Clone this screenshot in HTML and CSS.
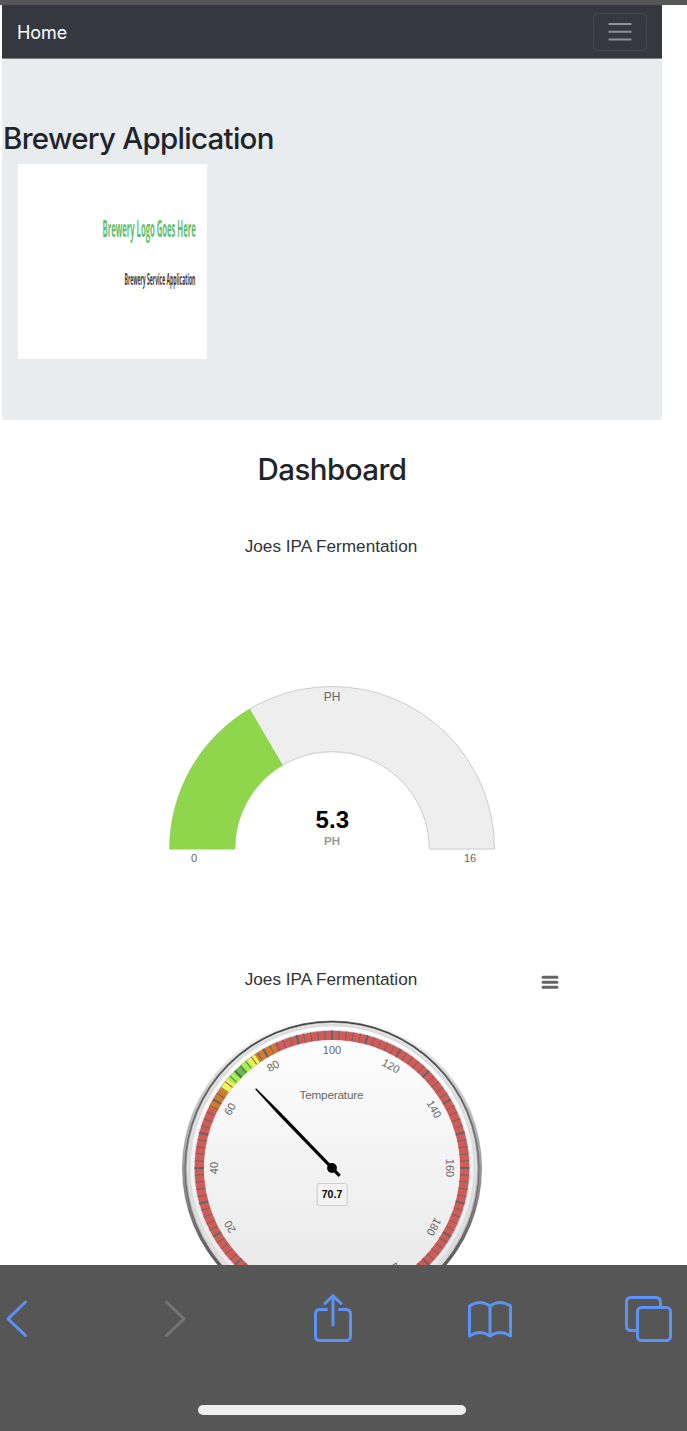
FILE: index.html
```html
<!DOCTYPE html>
<html lang="en">
<head>
<meta charset="utf-8">
<title>Brewery Application</title>
<link rel="stylesheet" href="styles.css">
</head>
<body>
<div class="statusbar"></div>
<main class="page">
  <nav class="navbar">
    <a class="nav-home">Home</a>
    <button class="nav-toggle" aria-label="Menu"><svg width="24" height="20" viewBox="0 0 24 20"><path d="M.5 2H23.5M.5 9.8H23.5M.5 17.4H23.5" stroke="#919496" stroke-width="2"/></svg></button>
  </nav>
  <header class="hero">
    <h1 class="hero-title">Brewery Application</h1>
    <svg class="logo" width="189" height="195" viewBox="0 0 189 195">
      <text class="logo-name" transform="translate(84.500 73) scale(.36 1)" textLength="259" lengthAdjust="spacingAndGlyphs">Brewery Logo Goes Here</text>
      <text class="logo-sub" transform="translate(106.500 120.500) scale(.36 1)" textLength="197" lengthAdjust="spacingAndGlyphs">Brewery Service Application</text>
    </svg>
  </header>
  <h2 class="dash-title">Dashboard</h2>
  <section class="chart chart-ph">
    <h3 class="chart-title">Joes IPA Fermentation</h3>
    <svg class="ph-gauge" width="340" height="190" viewBox="162 680 340 190">
      <path d="M169.5 849A162.5 162.5 0 0 1 494.5 849H429.3A97.3 97.3 0 0 0 234.7 849Z" fill="#eee" stroke="#ccc"/>
      <path d="M169.5 849.3A162.5 162.5 0 0 1 249.8 708.8L282.8 765.1A97.3 97.3 0 0 0 235.1 849.3Z" fill="#8fd64d"/>
      <g class="gauge-text">
        <text x="332" y="701" class="t12">PH</text>
        <text x="194" y="862.3" class="t11">0</text>
        <text x="470" y="862.3" class="t11">16</text>
        <text x="332.3" y="828" class="ph-value">5.3</text>
        <text x="332" y="845" class="ph-unit">PH</text>
      </g>
    </svg>
  </section>
  <section class="chart chart-temp">
    <div class="temp-head">
      <h3 class="chart-title">Joes IPA Fermentation</h3>
      <svg class="chart-menu" width="18" height="16" viewBox="0 0 18 16"><path d="M2 3.2H16M2 8.2H16M2 13.2H16" stroke="#666" stroke-width="3" stroke-linecap="round"/></svg>
    </div>
    <svg class="temp-gauge" width="304" height="304" viewBox="-152 -152 304 304">
      <defs>
        <linearGradient id="rim" x2="0" y2="1"><stop stop-color="#fff"/><stop offset="1" stop-color="#333"/></linearGradient>
        <linearGradient id="bezel" x2="0" y2="1"><stop stop-color="#333"/><stop offset="1" stop-color="#fff"/></linearGradient>
        <linearGradient id="face" x2="0" y2="1"><stop stop-color="#fff"/><stop offset="1" stop-color="#e6e6e6"/></linearGradient>
      </defs>
      <circle r="150" fill="url(#rim)"/>
      <circle r="147" fill="url(#bezel)" stroke="#555" stroke-width=".7"/>
      <circle r="145.2" fill="url(#face)" stroke="#ccc" stroke-width=".7"/>
      <circle r="143" fill="none" stroke="#ddd" stroke-width="3"/>
      <circle r="137.6" fill="none" stroke="#ccd6eb"/>
      <g class="bands" transform="rotate(120)">
        <circle r="132.7" pathLength="360" stroke="#d35b57" stroke-dasharray="300 60"/>
        <circle r="132.7" pathLength="360" stroke="#d27a2d" stroke-dasharray="0 86.3 38.7 360"/>
        <circle r="132.7" pathLength="360" stroke="#f5f552" stroke-dasharray="0 95.7 20 360"/>
        <circle r="132.7" pathLength="360" stroke="#a2f24a" stroke-dasharray="0 100.5 11.5 360"/>
        <circle r="132.7" pathLength="360" stroke="#69bb4a" stroke-dasharray="0 104.5 4.2 360"/>
        <circle class="tick" r="132.7" pathLength="360" stroke-dasharray=".42 2.58" stroke-dashoffset=".21"/>
        <circle class="tick" r="132.7" pathLength="360" stroke-dasharray=".9 14.1" stroke-dashoffset=".45"/>
      </g>
      <g class="gauge-text t11">
        <text y="-114">100</text>
        <text transform="rotate(30)" y="-114">120</text>
        <text transform="rotate(60)" y="-114">140</text>
        <text transform="rotate(90)" y="-114">160</text>
        <text transform="rotate(120)" y="-114">180</text>
        <text transform="rotate(150)" y="-114">200</text>
        <text transform="rotate(-30)" y="-114">80</text>
        <text transform="rotate(-60)" y="-114">60</text>
        <text transform="rotate(-90)" y="-114">40</text>
        <text transform="rotate(-120)" y="-114">20</text>
        <text class="gauge-label" x="-.5" y="-69" textLength="64">Temperature</text>
      </g>
      <rect x="-14.8" y="15.5" width="30" height="22" rx="2" fill="#f3f3f3" stroke="#ccc"/>
      <text class="temp-value" y="30">70.7</text>
      <path d="M-.7-110H.7L1.6-76V11H-1.6V-76Z" transform="rotate(-43.95)"/>
      <circle r="4.9"/>
    </svg>
  </section>
</main>
<footer class="toolbar">
  <div class="toolbar-icons">
    <svg width="48" height="40" viewBox="0 0 24 40"><path d="M20.5 3L3 19.8L20.5 36.5" stroke="#5b93f5"/></svg>
    <svg width="48" height="40" viewBox="0 0 24 40"><path d="M3.5 3L21 19.8L3.5 36.5" stroke="#737373"/></svg>
    <svg class="share" width="48" height="50" viewBox="0 0 40 50"><path d="M13.5 15.5H7Q2.5 15.5 2.5 20V42Q2.5 46.5 7 46.5H33Q37.5 46.5 37.5 42V20Q37.5 15.5 33 15.5H26.5M20 31V2M12 9.5L20 1.7L28 9.5" stroke="#5b93f5"/></svg>
    <svg class="book" width="48" height="40" viewBox="0 0 46 40"><path d="M23 6V36M23 6Q13-1 2.5 6V36Q13 29 23 36Q33 29 43.5 36V6Q33-1 23 6" stroke="#5b93f5"/></svg>
    <svg width="48" height="48" viewBox="0 0 48 48"><path d="M12 35.5H7Q2.500 35.500 2.500 31V7Q2.500 2.500 7 2.500H32Q36.500 2.500 36.500 7V12" stroke="#5b93f5"/><rect x="13.500" y="12.500" width="33" height="33" rx="4" stroke="#5b93f5"/></svg>
  </div>
  <div class="home-indicator"></div>
</footer>
</body>
</html>
```
FILE: styles.css
```css
* { box-sizing: border-box; }
body {
  margin: 0;
  width: 687px;
  height: 1431px;
  overflow: hidden;
  display: flex;
  flex-direction: column;
  background: #fff;
  color: #212529;
  font-family: Inter, "Liberation Sans", sans-serif;
}
h1, h2, h3 { margin: 0; }
svg { display: block; flex: none; }
.statusbar { height: 5px; flex: none; background: #565656; }
.page { width: 660px; height: 1260px; margin-left: 2px; overflow: hidden; flex: none; }
.navbar {
  height: 54px;
  padding: 0 15px;
  display: flex;
  align-items: center;
  justify-content: space-between;
  background: #35383f;
  border-bottom: 1px solid #7c8085;
}
.nav-home { color: #fff; font-size: 18px; letter-spacing: -.1px; line-height: 24px; padding-top: 2px; }
.nav-toggle {
  width: 54px;
  height: 38px;
  padding: 0;
  display: flex;
  align-items: center;
  justify-content: center;
  background: none;
  border: 1px solid #45484d;
  border-radius: 4px;
}
.hero { height: 361px; padding-top: 60px; background: #e8ecef; border-radius: 4px; }
.hero-title { padding-left: 1px; font-size: 29.500px; line-height: 38px; font-weight: 500; white-space: nowrap; letter-spacing: -.72px; }
.logo { margin: 7px 0 0 16px; background: #fff; }
.logo-name, .logo-sub { font-family: "Open Sans", "Noto Sans", sans-serif; font-weight: 700; }
.logo-name { font-size: 23px; fill: #62bd70; }
.logo-sub { font-size: 16px; fill: #3b3b40; }
.dash-title { margin-top: 29px; height: 40px; font-size: 29.500px; line-height: 40px; font-weight: 500; text-align: center; letter-spacing: -.55px; }
.chart { color: #333; font-family: "Liberation Sans", Arial, sans-serif; }
.chart-ph { height: 431px; padding-top: 46px; }
.chart-title { padding-right: 2px; font-size: 17.200px; line-height: 22px; font-weight: 400; text-align: center; }
.ph-gauge { margin: 123px 0 0 160px; }
.gauge-text { text-anchor: middle; fill: #666; }
.gauge-text, .temp-value { font-family: "Liberation Sans", Arial, sans-serif; }
.t12 { font-size: 12px; }
.t11 { font-size: 11px; }
.gauge-label { font-size: 11.700px; }
.ph-value { font-size: 24px; font-weight: 700; fill: #000; }
.ph-unit { font-size: 11.500px; font-weight: 700; fill: #999; }
.chart-temp { padding-top: 48px; }
.temp-head { display: grid; grid-template-columns: 1fr auto 1fr; }
.temp-head .chart-title { grid-column: 2; }
.chart-menu { margin: 6px 0 0 122px; }
.temp-gauge { margin: 26px auto 0; }
.bands circle { fill: none; stroke-width: 9.200px; }
.bands .tick { stroke: #666; }
.temp-value { font-size: 10.500px; font-weight: 700; text-anchor: middle; fill: #000; }
.toolbar { height: 166px; flex: none; padding: 27px 0 16px; background: #565656; display: flex; flex-direction: column; align-items: flex-start; justify-content: space-between; }
.toolbar-icons { width: 679px; height: 54px; margin-left: -7px; display: flex; align-items: center; justify-content: space-between; }
.toolbar-icons path, .toolbar-icons rect { fill: none; stroke-width: 3px; stroke-linecap: round; stroke-linejoin: round; }
.share { margin-bottom: 1px; }
.book { margin-top: 2px; }
.home-indicator { width: 268px; height: 10px; margin-left: 198px; border-radius: 5px; background: #efefef; }
```
